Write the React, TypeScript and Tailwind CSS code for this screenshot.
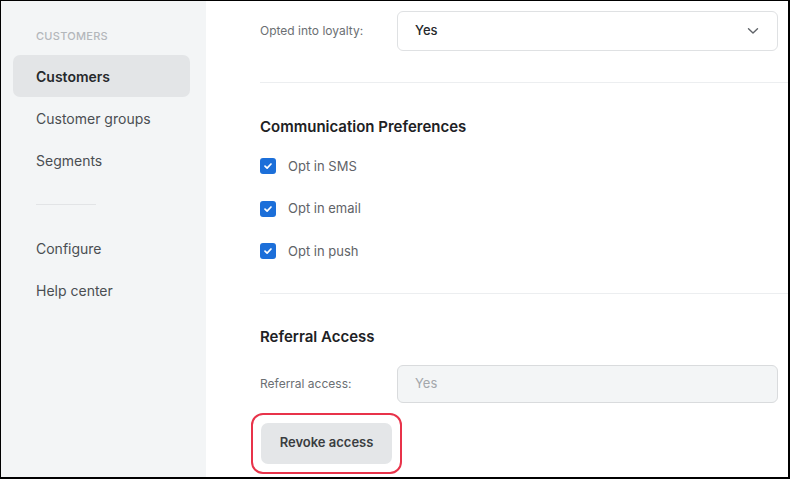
import React from "react";

function Check() {
  return (
    <span className="flex h-[16px] w-[16px] items-center justify-center rounded-[3px] bg-[#1c6fd9]">
      <svg width="10" height="10" viewBox="0 0 10 10" fill="none">
        <path d="M2 5.2 L4.1 7.2 L8 3" stroke="white" strokeWidth="1.7" strokeLinecap="round" strokeLinejoin="round" />
      </svg>
    </span>
  );
}

export default function App() {
  const font = { fontFamily: "Inter, 'Noto Sans', sans-serif" };
  return (
    <div style={font} className="flex h-[479px] w-[790px] border-t border-l border-r-2 border-b-2 border-black bg-white text-[#202124]">
      <aside className="flex w-[205px] shrink-0 flex-col bg-[#f3f5f6] pt-[27px]">
        <div className="pl-[35px] text-[11px] leading-[16px] font-medium tracking-wide text-[#b3b7bb]">CUSTOMERS</div>
        <div className="mt-[11px] ml-[12px] flex h-[42px] w-[177px] items-center rounded-[7px] bg-[#e3e5e7] pl-[23px] text-[14px] font-semibold text-[#26292c]">Customers</div>
        <div className="ml-[12px] flex h-[42px] items-center pl-[23px] text-[14px] text-[#4a4e52]">Customer groups</div>
        <div className="ml-[12px] flex h-[42px] items-center pl-[23px] text-[14px] text-[#4a4e52]">Segments</div>
        <div className="mt-[23px] ml-[35px] h-px w-[60px] bg-[#e2e4e6]" />
        <div className="mt-[22px] ml-[12px] flex h-[42px] items-center pl-[23px] text-[14px] text-[#4a4e52]">Configure</div>
        <div className="ml-[12px] flex h-[42px] items-center pl-[23px] text-[14px] text-[#4a4e52]">Help center</div>
      </aside>
      <main className="flex flex-1 flex-col pt-[10px] pr-[10px] pl-[54px]">
        <div className="flex items-center">
          <div className="w-[137px] text-[12px] text-[#6b6f73]">Opted into loyalty:</div>
          <div className="flex h-[40px] flex-1 items-center justify-between rounded-[6px] border border-[#dfe1e3] pr-[18px] pl-[17px]">
            <span className="text-[13px] font-medium text-[#26292c]">Yes</span>
            <svg width="12" height="8" viewBox="0 0 12 8" fill="none">
              <path d="M1.5 1.8 L6 6 L10.5 1.8" stroke="#5f6368" strokeWidth="1.4" strokeLinecap="round" strokeLinejoin="round" />
            </svg>
          </div>
        </div>
        <div className="mt-[31px] -mr-[10px] h-px bg-[#eceef0]" />
        <div className="mt-[34px] text-[15px] leading-[20px] font-semibold text-[#202124]">Communication Preferences</div>
        <div className="mt-[8px] flex flex-col">
          {["Opt in SMS", "Opt in email", "Opt in push"].map((t) => (
            <div key={t} className="flex h-[42.5px] items-center gap-[12px]">
              <Check />
              <span className="text-[13px] text-[#5f6368]">{t}</span>
            </div>
          ))}
        </div>
        <div className="mt-[20px] -mr-[10px] h-px bg-[#eceef0]" />
        <div className="mt-[33px] text-[15px] leading-[20px] font-semibold text-[#202124]">Referral Access</div>
        <div className="mt-[18px] flex items-center">
          <div className="w-[137px] text-[12px] text-[#6b6f73]">Referral access:</div>
          <div className="flex h-[38px] flex-1 items-center rounded-[6px] border border-[#d9dbdd] bg-[#f3f5f6] pl-[17px]">
            <span className="text-[13px] text-[#a3a7ab]">Yes</span>
          </div>
        </div>
        <div className="mt-[10px] -ml-[9px] w-[151px] rounded-[12px] border-2 border-[#e8334a] p-[8px]">
          <div className="flex h-[41px] items-center justify-center rounded-[7px] bg-[#e4e6e8] text-[13px] font-semibold text-[#3a3d40]">Revoke access</div>
        </div>
      </main>
    </div>
  );
}
